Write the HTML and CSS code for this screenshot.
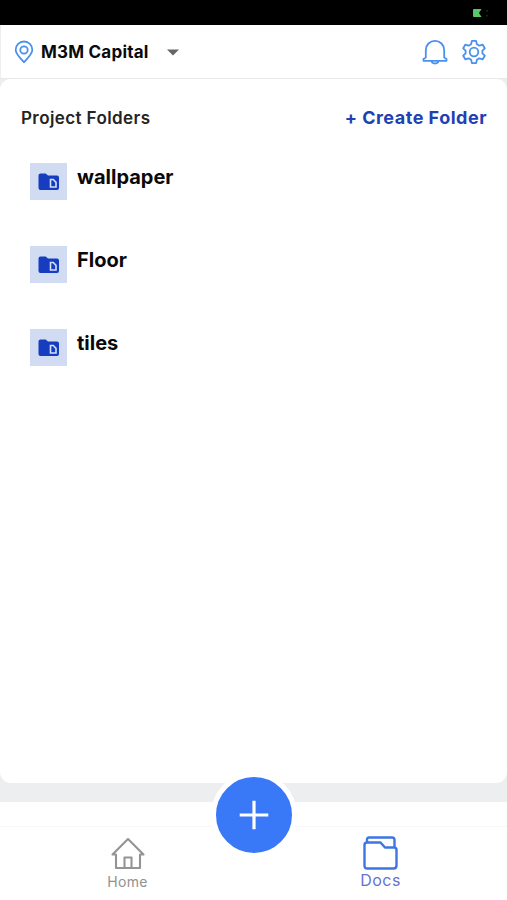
FILE: index.html
```html
<!DOCTYPE html>
<html lang="en">
<head>
<meta charset="utf-8">
<title>Project Folders</title>
<link rel="stylesheet" href="styles.css">
</head>
<body>
<div class="app">
  <div class="status">
    <svg class="battery" width="18" height="12" viewBox="0 0 18 12"><path d="M2 1h7.500L7 5l2.500 4H2Q1 9 1 8V2Q1 1 2 1Z" fill="#5cc66a"/><path d="M15 2v1.500M15 7v1.500" stroke="#23582b"/></svg>
  </div>
  <header class="header">
    <svg class="pin" width="20" height="24" viewBox="0 0 20 24"><path d="M10 22.200C7 18.500 1.700 14.500 1.700 9.800a8.300 8.300 0 0 1 16.600 0C18.300 14.500 13 18.500 10 22.200Z"/><circle cx="10" cy="10" r="3.700"/></svg>
    <span class="project">M3M Capital</span>
    <svg class="caret" width="12" height="7" viewBox="0 0 12 7"><path d="M0 .5h12L6 6.500Z" fill="#666"/></svg>
    <svg class="bell" width="26" height="26" viewBox="0 0 26 26"><path d="M3.800 18.500V11a9.200 9.200 0 0 1 18.400 0v7.500l2.300 1.600v1.700h-23v-1.700ZM9.500 22c.4 3.300 6.600 3.300 7 0"/></svg>
    <svg class="gear" width="26" height="26" viewBox="0 0 26 26"><path d="M10.900 1.900h4.200l.8 3.300 2.500 1.500 3.300-1 2.100 3.600-2.400 2.400v2.600l2.400 2.400-2.100 3.600-3.300-1-2.500 1.500-.8 3.300h-4.200l-.8-3.300-2.500-1.500-3.300 1-2.100-3.600 2.400-2.400v-2.600L2.200 9.300l2.100-3.600 3.300 1 2.500-1.500Z"/><circle cx="13" cy="13" r="4.300"/></svg>
  </header>
  <main class="content">
    <section class="card">
      <div class="title-row">
        <h1 class="title">Project Folders</h1>
        <span class="create">+ Create Folder</span>
      </div>
      <ul class="folders">
        <li class="folder"><span class="tile"><svg width="22" height="18" viewBox="0 0 22 18"><path d="M2.500.5h5.200l2.300 2H19q2 0 2 2V15q0 2-2 2H2.500q-2 0-2-2V2.500q0-2 2-2Z" fill="#163cbf"/><path d="M12.500 6.500h2.800L18 9.400V14h-5.500Z" fill="none" stroke="#d3dff5" stroke-width="1.600"/></svg></span><span class="name">wallpaper</span></li>
        <li class="folder"><span class="tile"><svg width="22" height="18" viewBox="0 0 22 18"><path d="M2.500.5h5.200l2.300 2H19q2 0 2 2V15q0 2-2 2H2.500q-2 0-2-2V2.500q0-2 2-2Z" fill="#163cbf"/><path d="M12.500 6.500h2.800L18 9.400V14h-5.500Z" fill="none" stroke="#d3dff5" stroke-width="1.600"/></svg></span><span class="name">Floor</span></li>
        <li class="folder"><span class="tile"><svg width="22" height="18" viewBox="0 0 22 18"><path d="M2.500.5h5.200l2.300 2H19q2 0 2 2V15q0 2-2 2H2.500q-2 0-2-2V2.500q0-2 2-2Z" fill="#163cbf"/><path d="M12.500 6.500h2.800L18 9.400V14h-5.500Z" fill="none" stroke="#d3dff5" stroke-width="1.600"/></svg></span><span class="name">tiles</span></li>
      </ul>
    </section>
  </main>
  <nav class="nav">
    <div class="tabs">
      <div class="tab home">
        <svg width="36" height="36" viewBox="0 0 36 36"><path d="M6 19.500H2.500L18 4l15.500 15.500H30V33H6ZM14.500 33V22.500h7V33"/></svg>
        <span>Home</span>
      </div>
      <div class="tab docs">
        <svg width="36" height="36" viewBox="0 0 36 36"><path d="M4 8V4.500q0-2 2-2h23q2.500 0 2.500 2.500v7.500M4 7.500h13.500l4.500 5h9q2.500 0 2.500 2.500v15.500q0 3-3 3h-26q-3 0-3-3V10q0-2.500 2.500-2.500Z"/></svg>
        <span>Docs</span>
      </div>
    </div>
    <div class="fab"><svg width="30" height="30" viewBox="0 0 30 30"><path d="M15 .7v28.600M.7 15h28.600" stroke="#fff" stroke-width="3.200"/></svg></div>
  </nav>
</div>
</body>
</html>
```
FILE: styles.css
```css
* { box-sizing: border-box; }
body { margin: 0; background: #fff; font-family: Inter, "Liberation Sans", sans-serif; }
svg { display: block; flex: none; }
.app { width: 507px; height: 900px; display: flex; flex-direction: column; overflow: hidden; }
.status { height: 25px; background: #000; display: flex; justify-content: flex-end; padding: 8px 17px 0 0; }
.header { height: 54px; display: flex; align-items: center; padding: 0 20px 0 14px; border-left: 1px solid #eee; border-bottom: 1px solid #e9e9ea; background: #fff; }
.pin, .bell, .gear { fill: none; stroke: #4a91ee; stroke-width: 1.800; stroke-linejoin: round; }
.pin { margin-left: -1px; }
.project { margin-left: 7px; font-size: 17px; font-weight: 650; letter-spacing: .22px; line-height: 20px; width: 108px; white-space: nowrap; color: #0a0a0a; }
.caret { margin-left: 18px; position: relative; top: 1px; }
.bell { margin-left: auto; }
.gear { margin-left: 13px; }
.content { height: 723px; background: #edeef0; padding-bottom: 19px; }
.card { height: 704px; background: #fff; border-radius: 11px; padding: 28px 20px 0 20px; }
.title-row { display: flex; justify-content: space-between; align-items: center; height: 22px; }
.title { margin: 0 0 0 1px; font-size: 17px; font-weight: 600; letter-spacing: .4px; color: #242424; white-space: nowrap; }
.create { font-size: 18px; font-weight: 700; letter-spacing: .5px; line-height: 20px; margin-bottom: 1px; color: #1f41b2; white-space: nowrap; }
.folders { list-style: none; margin: 34px 0 0; padding: 0 0 0 10px; }
.folder { height: 83px; display: flex; align-items: flex-start; gap: 10px; }
.tile { width: 37px; height: 37px; background: #d1dcf3; display: flex; align-items: center; justify-content: center; }
.name { font-size: 20px; line-height: 24px; font-weight: 650; margin-top: 2px; color: #090909; }
.nav { height: 98px; position: relative; padding-top: 24px; background: #fff; }
.tabs { display: grid; grid-template-columns: 1fr 1fr; padding-left: 1px; border-top: 1px solid #f7f7f8; }
.tab { display: flex; flex-direction: column; align-items: center; padding-top: 8px; }
.tab svg { fill: none; stroke-width: 2; stroke-linejoin: round; }
.tab span { line-height: 20px; }
.home { color: #919191; font-size: 14px; letter-spacing: .35px; }
.home svg { stroke: #949494; stroke-width: 2.100; }
.home span { line-height: 21px; }
.docs { color: #6573d0; font-size: 16px; letter-spacing: .5px; }
.docs svg { stroke: #3d76e3; stroke-width: 2.400; }
.docs span { line-height: 18px; }
.fab { position: absolute; left: 211px; top: -30.5px; width: 86px; height: 86px; border: 5px solid #fff; border-radius: 50%; background: #3978f6; display: flex; align-items: center; justify-content: center; }
```
